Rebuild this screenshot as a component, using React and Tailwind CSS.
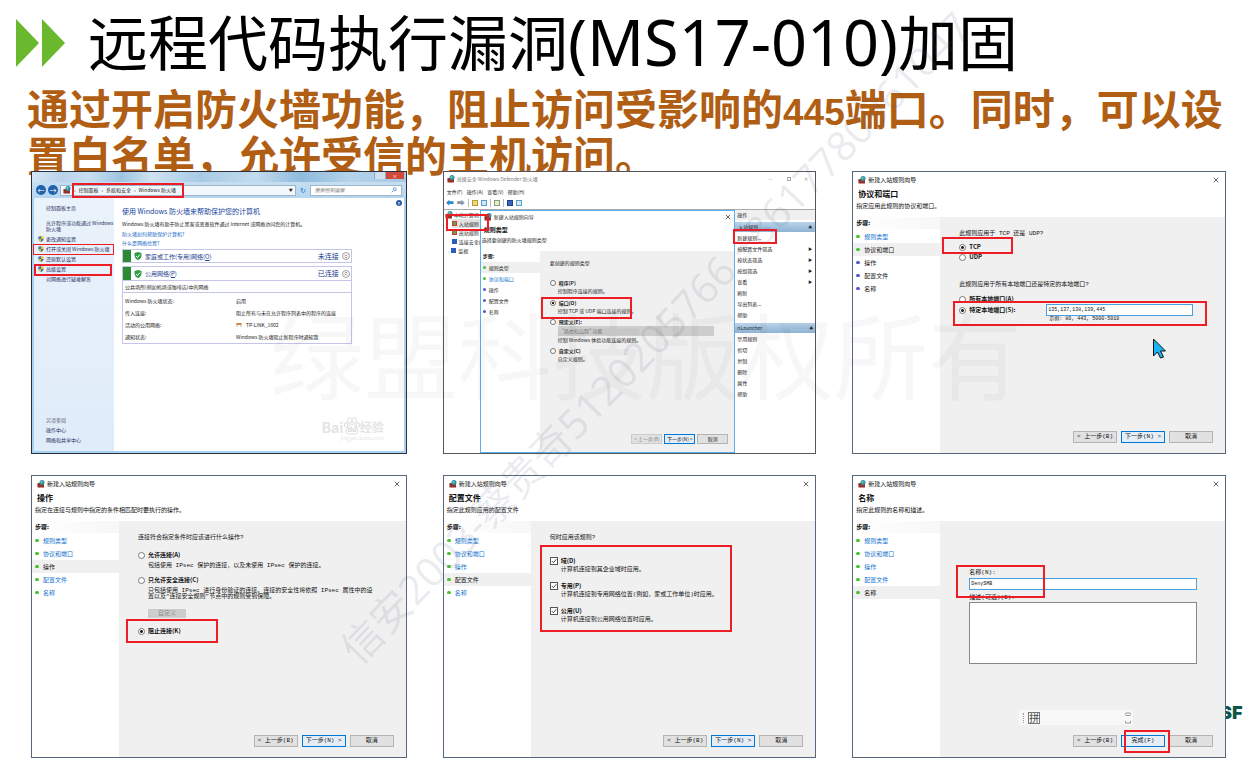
import React from "react";

function FirewallIcon() {
  return (
    <svg viewBox="0 0 16 16" className="size-2 shrink-0" aria-hidden="true">
      <path d="M1 6h13v9H1z" fill="#a5382c" />
      <path d="M1 9h13M1 12h13M5 6v3M10 6v3M3 9v3M8 9v3M12 9v3M5 12v3M10 12v3" stroke="#7e2c22" strokeWidth="1" />
      <circle cx="10" cy="5" r="5" fill="#2d8fb8" />
      <path d="M7 3c2-2 4-1 4 1s-2 1-2 3-2-1-2-4z" fill="#7ed36a" />
    </svg>
  );
}

function CloseIcon() {
  return (
    <svg viewBox="0 0 8 8" className="size-1.5" aria-hidden="true">
      <path d="M1 1l6 6M7 1l-6 6" stroke="#333" strokeWidth="1" fill="none" />
    </svg>
  );
}

function Shield() {
  return (
    <svg viewBox="0 0 8 8" className="size-1.5 shrink-0" aria-hidden="true">
      <path d="M4 0l3.5 1v3Q7.500 6.500 4 8z" fill="#f0c020" />
      <path d="M4 0L.5 1v3Q.5 6.500 4 8z" fill="#3478c8" />
      <path d="M.5 4H4v4Q.8 6.500.5 4z" fill="#f0c020" />
      <path d="M7.500 4H4v4q3.200-1.500 3.500-4z" fill="#3478c8" />
    </svg>
  );
}

function CheckShield() {
  return (
    <svg viewBox="0 0 16 16" className="size-2 shrink-0" aria-hidden="true">
      <path d="M8 0l7 2v6q-1 6-7 8Q2 14 1 8V2z" fill="#2f9e44" />
      <path d="M4 8l3 3 5-6" stroke="#fff" strokeWidth="2" fill="none" />
    </svg>
  );
}

function Mark({ className }) {
  return <div aria-hidden="true" className={`pointer-events-none absolute border-[#ee1c25] ${className}`} />;
}

function Radio({ name, label, checked, small }) {
  return (
    <label className={`flex h-2 items-center gap-[3px] font-['Noto_Sans_CJK_SC',sans-serif] font-bold leading-[8px] ${small ? "text-[5px]" : "text-[6px]"}`}>
      <input
        type="radio"
        name={name}
        defaultChecked={checked}
        className={`appearance-none rounded-full border border-[#777] bg-white checked:bg-[radial-gradient(circle,#222_30%,white_50%)] ${small ? "size-1.5" : "size-[7px]"}`}
      />
      {label}
    </label>
  );
}

function Check({ label, desc }) {
  return (
    <div>
      <label className="flex h-2 items-center gap-[3px] font-['Noto_Sans_CJK_SC',sans-serif] text-[6px] font-bold leading-[8px]">
        <span className="grid size-2">
          <input type="checkbox" defaultChecked className="col-start-1 row-start-1 size-2 appearance-none border border-[#555] bg-white" />
          <svg viewBox="0 0 8 8" className="pointer-events-none col-start-1 row-start-1 size-2" aria-hidden="true">
            <path d="M1.800 4l1.600 1.700L6.300 2.200" stroke="#222" strokeWidth=".8" fill="none" />
          </svg>
        </span>
        {label}
      </label>
      <p className="mt-px pl-[11px] leading-[8px]">{desc}</p>
    </div>
  );
}

function Steps({ current, blueFrom, small }) {
  const names = ["规则类型", "协议和端口", "操作", "配置文件", "名称"];
  return (
    <ol className="mt-px">
      {names.map((n, i) => {
        const later = i >= blueFrom;
        return (
          <li
            key={n}
            className={`flex items-center ${small ? "h-[11px] gap-[3px] pl-0.5 text-[5px]" : "h-[13px] gap-1 pl-[3px] text-[6px]"} ${i === current ? "bg-[#f0f0f0]" : ""}`}
          >
            <span className={`${small ? "size-[3px]" : "h-[3px] w-1"} rounded-full ${later ? "bg-[#5757d0]" : "bg-[#48c22f]"}`} />
            {i === current || later ? <span>{n}</span> : <a href="#step" className="text-[#1273cf]">{n}</a>}
          </li>
        );
      })}
    </ol>
  );
}

function Button({ children, primary, disabled, small }) {
  return (
    <button
      type="button"
      disabled={disabled}
      className={`whitespace-nowrap border ${small ? "h-2.5 w-[31px] text-[5px] leading-[8px]" : "h-3 w-11 text-[6px] leading-[10px]"} ${primary ? "border-[#0078d7] bg-[#e5eef7]" : "border-[#b4b4b4] bg-[#e1e1e1]"} ${disabled ? "border-[#ccc] bg-[#cfcfcf] text-[#888]" : ""}`}
    >
      {children}
    </button>
  );
}

function Wizard({ title, sub, current, blueFrom = 9, finish, children, marks }) {
  return (
    <section className="relative flex min-h-[283px] min-w-0 flex-col border border-[#55677a] bg-white text-[6px] text-[#111]">
      <div className="flex h-[15px] items-center gap-0.5 pl-[5px] pr-1.5">
        <FirewallIcon />
        <span className="flex-1">新建入站规则向导</span>
        <button type="button" aria-label="关闭"><CloseIcon /></button>
      </div>
      <h2 className="h-3.5 pl-[5px] text-[8px] font-bold leading-[14px]">{title}</h2>
      <p className="h-4 pl-[3px] leading-[9px]">{sub}</p>
      <div className="flex flex-1">
        <aside className="w-[87px] shrink-0">
          <h3 className="h-3 bg-gradient-to-r from-white to-[#f7f7f7] pl-[3px] font-bold leading-[12px]">步骤:</h3>
          <Steps current={current} blueFrom={blueFrom} />
        </aside>
        <div className="flex min-w-0 flex-1 flex-col bg-[#f0f0f0] pb-2.5 pl-[19px] pr-3 pt-[13px] font-['Liberation_Mono','Noto_Sans_CJK_SC',monospace] leading-[8px]">
          {children}
          <div className="mt-auto flex justify-end gap-1">
            <Button>&lt; 上一步(B)</Button>
            <Button primary>{finish ? "完成(F)" : "下一步(N) >"}</Button>
            <Button>取消</Button>
          </div>
        </div>
      </div>
      {marks}
    </section>
  );
}

function ControlPanel() {
  return (
    <section className="relative flex min-h-[283px] min-w-0 flex-col border border-[#2c2f3c] bg-[#a9d2f2] text-[5px] text-[#222]">
      <div className="flex h-2.5 items-start justify-end bg-[linear-gradient(90deg,#d5e6f4,#b9d3ea_8%,#c9dff0_15%,#9fc4e0_24%,#cfe2f1_32%,#a8cbe5_45%,#c2dbee_60%,#8fbbdc_72%,#b4d3ea_85%,#a6c9e4)]">
        <span className="h-[7px] w-3 border-x border-[#8ba9c2] bg-[#cfe0ee]" />
        <button type="button" aria-label="关闭窗口" className="mr-0.5 h-[7px] w-[18px] bg-[#cf4a3c] text-center text-[5px] leading-[6px] text-white">×</button>
      </div>
      <div className="flex h-4 items-center gap-0.5 bg-gradient-to-b from-[#c5def1] to-[#b5d6f0] px-1">
        <span className="flex size-2.5 items-center justify-center rounded-full bg-[#2261ac] text-[7px] leading-none text-white">←</span>
        <span className="flex size-2.5 items-center justify-center rounded-full bg-[#2261ac] text-[7px] leading-none text-white">→</span>
        <div className="flex h-[11px] flex-1 items-center gap-[3px] border border-[#9db6cc] bg-white/80 px-0.5 text-[5px]">
          <FirewallIcon />
          <span>›</span><span>控制面板</span><span>›</span><span>系统和安全</span><span>›</span><span className="flex-1">Windows 防火墙</span>
          <span className="text-[4px]">▼</span>
        </div>
        <span className="px-0.5 text-[7px] leading-none text-[#1d6fc0]">↻</span>
        <label className="flex h-[11px] w-[92px] items-center border border-[#9db6cc] bg-white px-1">
          <input aria-label="搜索控制面板" placeholder="搜索控制面板" className="w-0 flex-1 text-[5px] italic placeholder:text-[#777]" />
          <svg viewBox="0 0 8 8" className="size-1.5" aria-hidden="true"><circle cx="5" cy="3" r="2" stroke="#3a78b8" fill="none" /><path d="M3.500 4.500L1 7" stroke="#3a78b8" /></svg>
        </label>
      </div>
      <div className="mx-0.5 mb-0.5 flex flex-1 bg-white">
        <nav className="flex w-20 shrink-0 flex-col bg-gradient-to-b from-[#eaf2fb] to-[#dfecf9] pb-1.5 pl-1 pt-1.5 leading-[6px] text-[#1f2f60]">
          <a href="#home" className="pl-2 leading-[8px]">控制面板主页</a>
          <a href="#allow" className="mt-2 pl-2">允许程序或功能通过 Windows<br />防火墙</a>
          <a href="#notify" className="mt-0.5 flex h-2.5 items-center gap-0.5"><Shield />更改通知设置</a>
          <a href="#toggle" className="flex h-2.5 items-center gap-0.5 whitespace-nowrap"><Shield />打开或关闭 Windows 防火墙</a>
          <a href="#restore" className="flex h-2.5 items-center gap-0.5"><Shield />还原默认设置</a>
          <a href="#advanced" className="flex h-2.5 items-center gap-0.5"><Shield />高级设置</a>
          <a href="#trouble" className="flex h-2.5 items-center pl-2">对网络进行疑难解答</a>
          <div className="mt-auto flex flex-col pl-2 leading-[10px]">
            <span className="text-[#667]">另请参阅</span>
            <a href="#action">操作中心</a>
            <a href="#network">网络和共享中心</a>
          </div>
        </nav>
        <div className="relative flex-1 pl-2 pt-2">
          <span className="absolute right-0.5 top-0.5 flex size-1.5 items-center justify-center rounded-full bg-[#2b5ca8] text-[4px] font-bold leading-none text-white">?</span>
          <h2 className="text-[7px] leading-[10px] text-[#15449c]">使用 Windows 防火墙来帮助保护您的计算机</h2>
          <p className="mt-1 whitespace-nowrap leading-[8px]">Windows 防火墙有助于防止黑客或恶意软件通过 Internet 或网络访问您的计算机。</p>
          <a href="#how" className="mt-0.5 block leading-[8px] text-[#1668c6]">防火墙如何帮助保护计算机?</a>
          <a href="#what" className="mt-px block leading-[8px] text-[#1668c6]">什么是网络位置?</a>
          <div className="mr-[52px] mt-0.5 flex h-3.5 items-center gap-[3px] border border-[#c3c6e8] pr-px text-[7px] text-[#1b3c8c]">
            <span className="h-full w-2 bg-[#2c8a33]" /><CheckShield />
            <span className="flex-1 text-[6px]">家庭或工作(专用)网络(<u>O</u>)</span><span>未连接</span>
            <svg viewBox="0 0 8 8" className="size-2" fill="none" stroke="#888" strokeWidth=".8" aria-hidden="true"><circle cx="4" cy="4" r="3.500" /><path d="M2.500 2.500L4 4l1.500-1.500M2.500 4.500L4 6l1.500-1.500" /></svg>
          </div>
          <div className="mr-[52px] mt-[3px] border border-[#c3c6e8]">
            <div className="flex h-3.5 items-center gap-[3px] border-b border-[#c3c6e8] pr-px text-[7px] text-[#1b3c8c]">
              <span className="h-full w-2 bg-[#2c8a33]" /><CheckShield />
              <span className="flex-1 text-[6px]">公用网络(<u>P</u>)</span><span>已连接</span>
              <svg viewBox="0 0 8 8" className="size-2" fill="none" stroke="#888" strokeWidth=".8" aria-hidden="true"><circle cx="4" cy="4" r="3.500" /><path d="M2.500 3.500L4 2l1.500 1.500M2.500 5.500L4 4l1.500 1.500" /></svg>
            </div>
            <p className="h-3 border-b border-[#c3c6e8] pl-0.5 leading-[11px]">公共场所(例如机场或咖啡店)中的网络</p>
            <dl className="grid grid-cols-[111px_1fr] gap-y-[3px] whitespace-nowrap pb-0.5 pl-0.5 pt-[3px] leading-[9px]">
              <dt>Windows 防火墙状态:</dt><dd>启用</dd>
              <dt>传入连接:</dt><dd>阻止所有与未在允许程序列表中的程序的连接</dd>
              <dt>活动的公用网络:</dt>
              <dd className="flex items-center gap-1">
                <svg viewBox="0 0 8 6" className="h-1 w-1.5" aria-hidden="true"><path d="M0 0h8v3H0z" fill="#c98a4b" /><path d="M1 3v3M7 3v3" stroke="#c98a4b" /></svg>
                TP-LINK_1802
              </dd>
              <dt>通知状态:</dt><dd>Windows 防火墙阻止新程序时通知我</dd>
            </dl>
          </div>
          <div className="absolute bottom-2.5 right-5 text-[#e4e4e4]">
            <div className="flex items-end text-[14px] font-bold leading-[16px]">
              <span>Bai</span>
              <svg viewBox="0 0 16 18" className="h-[18px] w-4" aria-hidden="true">
                <g fill="#fff" stroke="#dcdcdc">
                  <ellipse cx="5.500" cy="3.500" rx="2" ry="3" /><ellipse cx="10.500" cy="3.500" rx="2" ry="3" />
                  <ellipse cx="2.200" cy="8" rx="1.700" ry="2.500" /><ellipse cx="13.800" cy="8" rx="1.700" ry="2.500" />
                  <path d="M8 7c3 0 3 3 5 5s1 5-2 5H5c-3 0-4-3-2-5s2-5 5-5z" />
                </g>
                <text x="8" y="15" fontSize="7" textAnchor="middle" fill="#d6d6d6">du</text>
              </svg>
              <span className="text-[12px]">经验</span>
            </div>
            <p className="text-right text-[5px] leading-[6px] text-[#e6e6e6]">jingyan.baidu.com</p>
          </div>
        </div>
      </div>
      <Mark className="left-10 top-[11px] h-[15px] w-28 border-2" />
      <Mark className="left-px top-[72px] h-[11px] w-[81px] border" />
      <Mark className="left-0.5 top-[92px] h-3 w-[78px] border-2" />
    </section>
  );
}

function ActionItem({ children, arrow }) {
  return (
    <li className="flex h-[11px] items-center justify-between pl-0.5 pr-[3px]">
      <button type="button" className="whitespace-nowrap">{children}</button>
      {arrow && <span className="text-[4px]">▶</span>}
    </li>
  );
}

function Defender() {
  const tool = "h-1.5 w-1.5 border";
  return (
    <section className="relative flex min-h-[283px] min-w-0 flex-col border border-[#55575c] bg-white text-[5px] text-[#222]">
      <div className="flex h-[14px] items-center gap-0.5 px-[3px] text-[#777]">
        <FirewallIcon />
        <span className="flex-1">高级安全 Windows Defender 防火墙</span>
        <span className="flex w-11 items-center justify-between pr-1 text-[#999]"><span>—</span><span className="size-1 border border-[#aaa]" /><span>✕</span></span>
      </div>
      <div className="flex h-[11px] items-center gap-1 px-[3px]">
        <button type="button">文件(F)</button><button type="button">操作(A)</button><button type="button">查看(V)</button><button type="button">帮助(H)</button>
      </div>
      <div className="flex h-[13px] items-center gap-[3px] border-b border-[#aaa] px-0.5">
        <span className="text-[8px] font-bold leading-none text-[#2f8bd0]">⬅</span>
        <span className="text-[8px] font-bold leading-none text-[#8c98a3]">➡</span>
        <span className="h-2 w-px bg-[#bbb]" />
        <span className={`${tool} border-[#b89b3c] bg-[#f1d675]`} />
        <span className={`${tool} border-[#5b9cc9] bg-[#cfe8f8]`} />
        <span className="h-2 w-px bg-[#bbb]" />
        <span className={`${tool} border-[#8a9b7a] bg-[#dff0cf]`} />
        <span className="h-2 w-px bg-[#bbb]" />
        <span className={`${tool} border-[#1d3f8f] bg-[#3763bd]`} />
        <span className={`${tool} border-[#5b9cc9] bg-[#cfe8f8]`} />
      </div>
      <div className="flex flex-1">
        <ul className="w-9 shrink-0 overflow-hidden whitespace-nowrap leading-[9px]">
          <li className="flex items-center gap-px pl-px"><FirewallIcon />本地计算机</li>
          <li className="ml-2 flex items-center gap-0.5 bg-[#e3e3e3]"><span className="size-[5px] shrink-0 border border-[#d33] bg-[#5a5]" />入站规则</li>
          <li className="ml-2 flex items-center gap-0.5"><span className="size-[5px] shrink-0 border border-[#d33] bg-[#5a5]" />出站规则</li>
          <li className="ml-2 flex items-center gap-0.5"><span className="size-[5px] shrink-0 bg-[#2d5bc0]" />连接安全规则</li>
          <li className="ml-1 flex items-center gap-0.5"><span className="text-[#999]">›</span><span className="size-[5px] shrink-0 bg-[#2d5bc0]" />监视</li>
        </ul>
        <div className="flex min-w-0 flex-1 flex-col border border-[#5db0ea] bg-white">
          <div className="flex h-3 items-center gap-0.5 px-[3px]">
            <FirewallIcon /><span className="flex-1">新建入站规则向导</span>
            <button type="button" aria-label="关闭向导"><CloseIcon /></button>
          </div>
          <h2 className="h-3 pl-[3px] text-[6px] font-bold leading-[14px]">规则类型</h2>
          <p className="h-4 pl-px leading-[10px]">选择要创建的防火墙规则类型</p>
          <div className="flex flex-1">
            <div className="w-[59px] shrink-0">
              <h3 className="h-2.5 pl-0.5 font-bold leading-[10px]">步骤:</h3>
              <Steps current={0} blueFrom={2} small />
            </div>
            <div className="flex min-w-0 flex-1 flex-col bg-[#f0f0f0] pb-2 pl-2.5 pr-1.5 pt-2 leading-[8px]">
              <p>要创建的规则类型</p>
              <div className="mt-3"><Radio small name="kind" label="程序(P)" /></div>
              <p className="pl-2">控制程序连接的规则。</p>
              <div className="mt-1"><Radio small name="kind" label="端口(O)" checked /></div>
              <p className="pl-2">控制 TCP 或 UDP 端口连接的规则。</p>
              <div className="mt-[3px]"><Radio small name="kind" label="预定义(E):" /></div>
              <select aria-label="预定义规则" disabled className="ml-2 h-2.5 w-[156px] appearance-none bg-[#cdcdcd] px-1 text-[5px] leading-[8px] text-[#777]">
                <option>"路由和远程" 功能</option>
              </select>
              <p className="pl-2">控制 Windows 体验功能连接的规则。</p>
              <div className="mt-[3px]"><Radio small name="kind" label="自定义(C)" /></div>
              <p className="pl-2">自定义规则。</p>
              <div className="mt-auto flex justify-end gap-0.5">
                <Button small disabled>&lt; 上一步(B)</Button><Button small primary>下一步(N) &gt;</Button><Button small>取消</Button>
              </div>
            </div>
          </div>
        </div>
        <aside className="w-20 shrink-0">
          <h3 className="h-2.5 bg-[#f0f0f0] pl-0.5 leading-[10px]">操作</h3>
          <h4 className="mt-0.5 flex h-2.5 items-center justify-between bg-gradient-to-b from-[#b9d3ea] to-[#8fb3d3] px-[3px]">入站规则<span className="text-[4px]">▲</span></h4>
          <ul>
            <ActionItem>新建规则...</ActionItem>
            <ActionItem arrow>按配置文件筛选</ActionItem>
            <ActionItem arrow>按状态筛选</ActionItem>
            <ActionItem arrow>按组筛选</ActionItem>
            <ActionItem arrow>查看</ActionItem>
            <ActionItem>刷新</ActionItem>
            <ActionItem>导出列表...</ActionItem>
            <ActionItem>帮助</ActionItem>
          </ul>
          <h4 className="mt-[3px] flex h-2.5 items-center justify-between bg-gradient-to-b from-[#b9d3ea] to-[#8fb3d3] px-0.5">nLauncher<span className="text-[4px]">▲</span></h4>
          <ul>
            <ActionItem>禁用规则</ActionItem>
            <ActionItem>剪切</ActionItem>
            <ActionItem>复制</ActionItem>
            <ActionItem>删除</ActionItem>
            <ActionItem>属性</ActionItem>
            <ActionItem>帮助</ActionItem>
          </ul>
        </aside>
      </div>
      <Mark className="left-0.5 top-[42px] h-[17px] w-[43px] border-2" />
      <Mark className="left-[97px] top-[125px] h-[22px] w-[91px] border-2" />
      <Mark className="right-[38px] top-[57px] h-[15px] w-11 border-2" />
    </section>
  );
}

export default function App() {
  return (
    <main className="relative overflow-hidden bg-white font-['Noto_Sans_CJK_SC',sans-serif]" lang="zh-CN">
      <header className="flex h-[84px] items-center gap-[22px] pl-4 pt-0.5">
        <svg viewBox="0 0 50 48" className="h-12 w-[50px]" aria-hidden="true">
          <path d="M0 0l23 24L0 48zM26 0l23 24-23 24z" fill="#69b82d" />
        </svg>
        <h1 className="whitespace-nowrap font-['Noto_Sans','Noto_Sans_CJK_SC',sans-serif] text-[60px] leading-[82px] text-black">远程代码执行漏洞<span className="text-[63px] leading-none">(MS17-010)</span>加固</h1>
      </header>
      <p className="pl-[27px] pr-2 text-[42px] font-bold leading-[45px] text-[#b05e14]">
        通过开启防火墙功能，阻止访问受影响的<span className="font-['Liberation_Sans',sans-serif] text-[37px] leading-none">445</span>端口。同时，可以设置白名单，允许受信的主机访问。
      </p>
      <span className="absolute left-[1220px] top-[704px] font-['Inter',sans-serif] text-[18px] font-black leading-[18px] text-[#0d5549]">SF</span>
      <div className="relative -mt-[5px] grid grid-cols-[376fr_374fr_374fr] gap-x-9 gap-y-[21px] pb-px pl-[31px] pr-[18px]">
        <ControlPanel />
        <Defender />
        <Wizard
          title="协议和端口" sub="指定应用此规则的协议和端口。" current={1} blueFrom={2}
          marks={
            <>
              <Mark className="left-[89px] top-[65px] h-[17px] w-[71px] border-2" />
              <Mark className="left-[100px] top-[129px] h-[25px] w-[254px] border-2" />
              <svg viewBox="0 0 14 22" className="absolute left-[299px] top-[166px] h-[22px] w-[15px]" aria-hidden="true">
                <path d="M1 1v17l4-4 3 6 3-1-3-6h5z" fill="#18b4f5" stroke="#111" />
              </svg>
            </>
          }
        >
          <p>此规则应用于 TCP 还是 UDP?</p>
          <div className="mt-[5px]"><Radio name="proto" label="TCP" checked /></div>
          <div className="mt-0.5"><Radio name="proto" label="UDP" /></div>
          <p className="mt-5">此规则应用于所有本地端口还是特定的本地端口?</p>
          <div className="mt-1.5"><Radio name="ports" label="所有本地端口(A)" /></div>
          <div className="mt-px flex items-center">
            <div className="w-[87px] shrink-0"><Radio name="ports" label="特定本地端口(S):" checked /></div>
            <input aria-label="特定本地端口" defaultValue="135,137,138,139,445" className="h-3 w-[147px] border border-[#4a9fe0] bg-white px-px text-[5px]" />
          </div>
          <p className="pl-[90px] text-[5px] leading-[7px]">示例: 80, 443, 5000-5010</p>
        </Wizard>
        <Wizard
          title="操作" sub="指定在连接与规则中指定的条件相匹配时要执行的操作。" current={2}
          marks={<Mark className="left-[94px] top-[143px] h-6 w-[92px] border-2" />}
        >
          <p>连接符合指定条件时应该进行什么操作?</p>
          <div className="mt-[9px]"><Radio name="act" label="允许连接(A)" /></div>
          <p className="mt-[3px] pl-2.5">包括使用 IPsec 保护的连接，以及未使用 IPsec 保护的连接。</p>
          <div className="mt-1.5"><Radio name="act" label="只允许安全连接(C)" /></div>
          <p className="mt-1 whitespace-nowrap pl-2.5 leading-[6px]">只包括使用 IPsec 进行身份验证的连接。连接的安全性将依照 IPsec 属性中的设<br />置以及“连接安全规则”节点中的规则受到保障。</p>
          <button type="button" disabled className="ml-2.5 mt-[9px] h-[9px] w-[38px] shrink-0 bg-[#cdcdcd] text-[6px] leading-[9px] text-[#888]">自定义</button>
          <div className="mt-[9px]"><Radio name="act" label="阻止连接(K)" checked /></div>
        </Wizard>
        <Wizard
          title="配置文件" sub="指定此规则应用的配置文件" current={3}
          marks={<Mark className="left-24 top-[69px] h-[87px] w-48 border-2" />}
        >
          <p>何时应用该规则?</p>
          <div className="mt-[15px] flex flex-col gap-2">
            <Check label="域(D)" desc="计算机连接到其企业域时应用。" />
            <Check label="专用(P)" desc="计算机连接到专用网络位置(例如，家或工作单位)时应用。" />
            <Check label="公用(U)" desc="计算机连接到公用网络位置时应用。" />
          </div>
        </Wizard>
        <Wizard
          title="名称" sub="指定此规则的名称和描述。" current={4} finish
          marks={
            <>
              <Mark className="left-[103px] top-[89px] h-[33px] w-[89px] border-2" />
              <Mark className="right-[55px] top-[254px] h-[23px] w-[46px] border-2" />
              <div className="absolute left-[166px] top-[234px] flex h-[15px] w-[114px] items-center bg-[#f8f8f8] pl-1 pr-0.5">
                <span className="h-2.5 border-l border-dotted border-[#999]" />
                <span className="ml-1 flex size-3 items-center justify-center border border-[#777] text-[10px] leading-none text-[#444]">拼</span>
                <svg viewBox="0 0 6 12" className="ml-auto h-3 w-1.5" fill="none" stroke="#999" aria-hidden="true"><rect x=".5" y="1" width="5" height="2.500" rx="1" /><path d="M.5 9v2h5V9" /></svg>
              </div>
            </>
          }
        >
          <div className="flex flex-col pl-2.5 pr-4 pt-[35px]">
            <label htmlFor="rule-name">名称(N):</label>
            <input id="rule-name" defaultValue="DenySMB" className="mt-px h-3 border border-[#4a9fe0] bg-white px-px text-[5px]" />
            <label htmlFor="rule-desc" className="mt-1">描述(可选)(D):</label>
            <textarea id="rule-desc" className="h-[62px] resize-none border border-[#888] bg-white text-[6px]" />
          </div>
        </Wizard>
      </div>
      <div className="pointer-events-none absolute left-[270px] top-[292px] whitespace-nowrap text-[94px] leading-[120px] text-black/[0.03]">绿盟科技版权所有</div>
      <div className="pointer-events-none absolute left-[655px] top-[337px] -translate-x-1/2 -translate-y-1/2 -rotate-46 whitespace-nowrap font-['Noto_Sans','Noto_Sans_CJK_SC',sans-serif] text-[41px] leading-[48px] text-[#5a6480]/12">
        信安2003-蔡贵奇5120205766 +8617780961047
      </div>
    </main>
  );
}
